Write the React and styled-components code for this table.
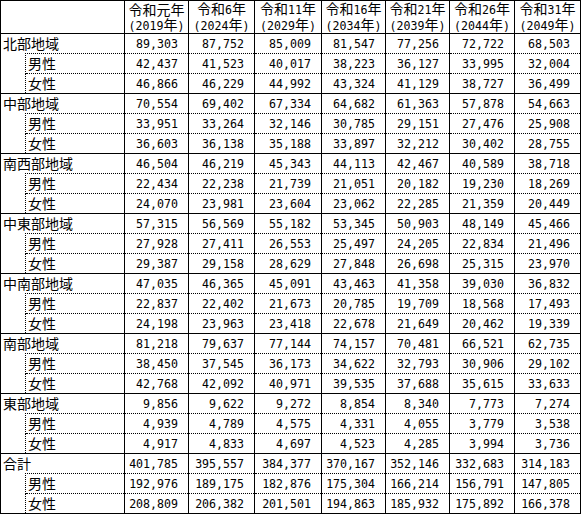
import React from "react";
import styled, { createGlobalStyle } from "styled-components";

const Global = createGlobalStyle`
  html, body { margin: 0; padding: 0; background: #fff; }
  body { font-family: "Noto Sans CJK JP", "Noto Sans", sans-serif; color: #000; }
`;

const Table = styled.table`
  border-collapse: collapse;
  table-layout: fixed;
  width: 581px;
  border: 1px solid #000;
  font-size: 14px;
  line-height: 14px;
`;

const Col = styled.col`
  width: ${(p) => p.$w}px;
`;

const Row = styled.tr`
  height: ${(p) => (p.$head ? 32 : 20)}px;
`;

const Lat = styled.span`
  font-family: "DejaVu Sans Mono", "Liberation Mono", monospace;
  font-size: 11.6px;
  line-height: 14px;
`;

const HeadBlank = styled.th`
  padding: 0;
  border: none;
`;

const Th = styled.th`
  padding: 0;
  font-weight: normal;
  text-align: center;
  vertical-align: middle;
  border-left: 1px solid #000;
  white-space: nowrap;
  line-height: 15px;
`;

const RegionLabel = styled.td`
  padding: 0 0 1px 2px;
  border-top: 1px solid #000;
  text-align: left;
  vertical-align: middle;
  white-space: nowrap;
`;

const Indent = styled.td`
  padding: 0;
  border: none;
`;

const SubLabel = styled.td`
  padding: 0 0 2px 2px;
  border-top: 1px dotted #000;
  border-left: 1px dotted #000;
  text-align: left;
  vertical-align: middle;
  white-space: nowrap;
`;

const Num = styled.td`
  padding: 0 10px 0 0;
  border-left: 1px solid #000;
  border-top: 1px ${(p) => (p.$sub ? "dotted" : "solid")} #000;
  text-align: right;
  vertical-align: middle;
  font-family: "DejaVu Sans Mono", "Liberation Mono", monospace;
  font-size: 11.6px;
  line-height: 14px;
  white-space: nowrap;
`;

const mix = (s) =>
  s.split(/([\x00-\x7f]+)/).filter(Boolean).map((part, i) =>
    /^[\x00-\x7f]+$/.test(part) ? <Lat key={i}>{part}</Lat> : <React.Fragment key={i}>{part}</React.Fragment>
  );

const headers = [
  ["令和元年", "(2019年)"],
  ["令和6年", "(2024年)"],
  ["令和11年", "(2029年)"],
  ["令和16年", "(2034年)"],
  ["令和21年", "(2039年)"],
  ["令和26年", "(2044年)"],
  ["令和31年", "(2049年)"],
];

const data = [
  {
    name: "北部地域",
    total: ["89,303", "87,752", "85,009", "81,547", "77,256", "72,722", "68,503"],
    male: ["42,437", "41,523", "40,017", "38,223", "36,127", "33,995", "32,004"],
    female: ["46,866", "46,229", "44,992", "43,324", "41,129", "38,727", "36,499"],
  },
  {
    name: "中部地域",
    total: ["70,554", "69,402", "67,334", "64,682", "61,363", "57,878", "54,663"],
    male: ["33,951", "33,264", "32,146", "30,785", "29,151", "27,476", "25,908"],
    female: ["36,603", "36,138", "35,188", "33,897", "32,212", "30,402", "28,755"],
  },
  {
    name: "南西部地域",
    total: ["46,504", "46,219", "45,343", "44,113", "42,467", "40,589", "38,718"],
    male: ["22,434", "22,238", "21,739", "21,051", "20,182", "19,230", "18,269"],
    female: ["24,070", "23,981", "23,604", "23,062", "22,285", "21,359", "20,449"],
  },
  {
    name: "中東部地域",
    total: ["57,315", "56,569", "55,182", "53,345", "50,903", "48,149", "45,466"],
    male: ["27,928", "27,411", "26,553", "25,497", "24,205", "22,834", "21,496"],
    female: ["29,387", "29,158", "28,629", "27,848", "26,698", "25,315", "23,970"],
  },
  {
    name: "中南部地域",
    total: ["47,035", "46,365", "45,091", "43,463", "41,358", "39,030", "36,832"],
    male: ["22,837", "22,402", "21,673", "20,785", "19,709", "18,568", "17,493"],
    female: ["24,198", "23,963", "23,418", "22,678", "21,649", "20,462", "19,339"],
  },
  {
    name: "南部地域",
    total: ["81,218", "79,637", "77,144", "74,157", "70,481", "66,521", "62,735"],
    male: ["38,450", "37,545", "36,173", "34,622", "32,793", "30,906", "29,102"],
    female: ["42,768", "42,092", "40,971", "39,535", "37,688", "35,615", "33,633"],
  },
  {
    name: "東部地域",
    total: ["9,856", "9,622", "9,272", "8,854", "8,340", "7,773", "7,274"],
    male: ["4,939", "4,789", "4,575", "4,331", "4,055", "3,779", "3,538"],
    female: ["4,917", "4,833", "4,697", "4,523", "4,285", "3,994", "3,736"],
  },
  {
    name: "合計",
    total: ["401,785", "395,557", "384,377", "370,167", "352,146", "332,683", "314,183"],
    male: ["192,976", "189,175", "182,876", "175,304", "166,214", "156,791", "147,805"],
    female: ["208,809", "206,382", "201,501", "194,863", "185,932", "175,892", "166,378"],
  },
];

const colWidths = [25, 99, 64, 66, 67, 64, 64, 65, 66];

export default function App() {
  return (
    <>
      <Global />
      <Table>
        <colgroup>
          {colWidths.map((w, i) => (
            <Col key={i} $w={w} />
          ))}
        </colgroup>
        <tbody>
          <Row $head>
            <HeadBlank colSpan={2} />
            {headers.map(([a, b], i) => (
              <Th key={i}>
                {mix(a)}
                <br />
                {mix(b)}
              </Th>
            ))}
          </Row>
          {data.map((r) => (
            <React.Fragment key={r.name}>
              <Row>
                <RegionLabel colSpan={2}>{r.name}</RegionLabel>
                {r.total.map((v, i) => (
                  <Num key={i}>{v}</Num>
                ))}
              </Row>
              <Row>
                <Indent rowSpan={2} />
                <SubLabel>男性</SubLabel>
                {r.male.map((v, i) => (
                  <Num key={i} $sub>{v}</Num>
                ))}
              </Row>
              <Row>
                <SubLabel>女性</SubLabel>
                {r.female.map((v, i) => (
                  <Num key={i} $sub>{v}</Num>
                ))}
              </Row>
            </React.Fragment>
          ))}
        </tbody>
      </Table>
    </>
  );
}
